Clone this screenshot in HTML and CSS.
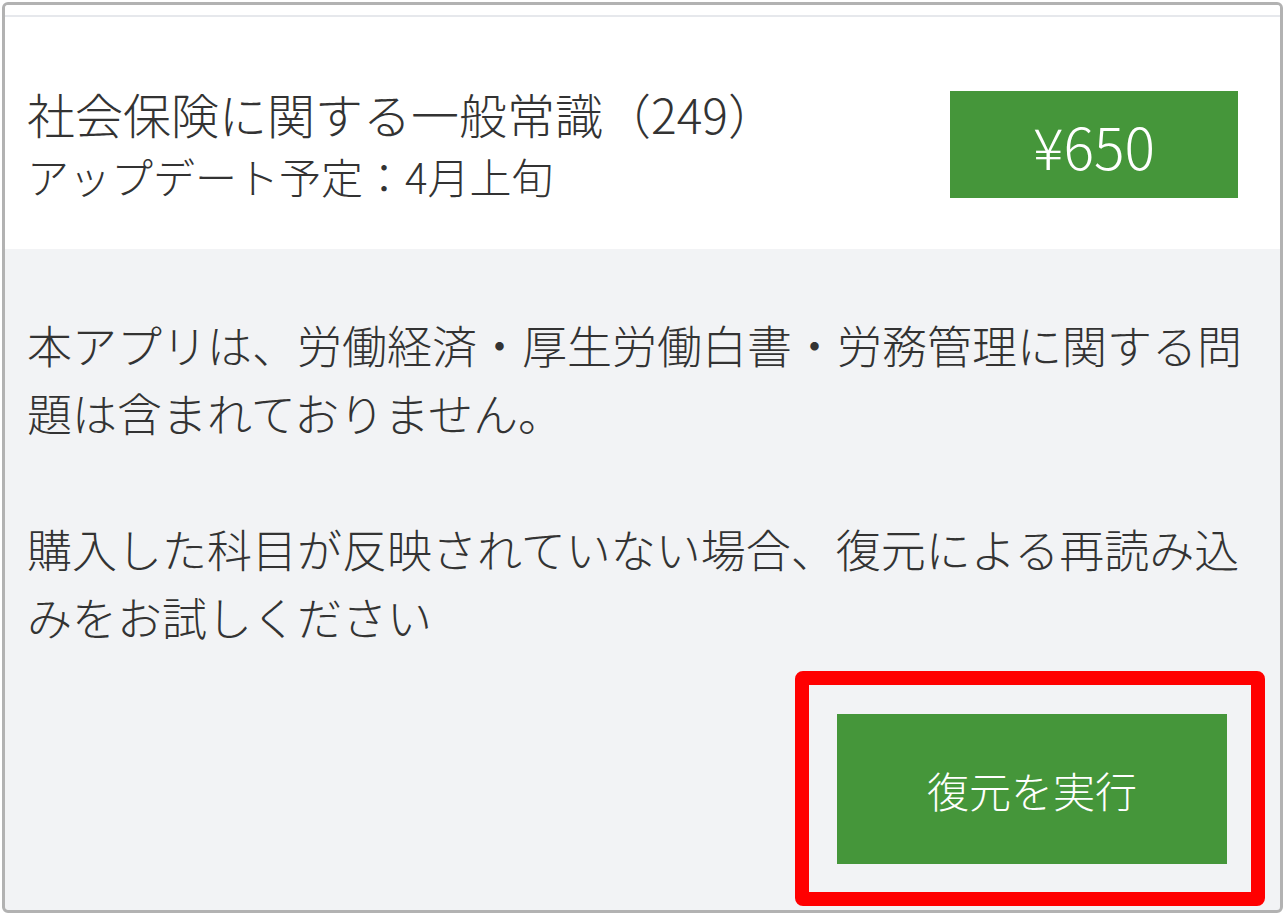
FILE: index.html
```html
<!DOCTYPE html>
<html lang="ja">
<head>
    <meta charset="UTF-8">
    <meta name="viewport" content="width=device-width, initial-scale=1.0">
    <title>科目の購入</title>
    <link rel="stylesheet" href="styles.css">
</head>
<body>
    <div class="frame">
        <div class="top-strip"></div>

        <section class="item">
            <div class="item-info">
                <h2 class="item-title">社会保険に関する一般常識（249）</h2>
                <p class="item-note">アップデート予定：4月上旬</p>
            </div>
            <button class="price-btn">¥650</button>
        </section>

        <section class="notice">
            <p class="notice-text">本アプリは、労働経済・厚生労働白書・労務管理に関する問題は含まれておりません。</p>
            <p class="notice-text">購入した科目が反映されていない場合、復元による再読み込みをお試しください</p>

            <div class="restore-row">
                <div class="restore-wrap">
                    <button class="restore-btn">復元を実行</button>
                    <span class="highlight"></span>
                </div>
            </div>
        </section>
    </div>
</body>
</html>
```

FILE: styles.css
```css
body {
    margin: 0;
    padding: 0;
    background-color: #ffffff;
    font-family: "Noto Sans CJK JP", "Noto Sans", sans-serif;
    font-weight: 300;
    color: #333333;
}
.frame {
    box-sizing: border-box;
    width: 1281px;
    height: 911px;
    margin: 2px 0 0 2px;
    border: 3px solid #b2b2b2;
    border-radius: 6px;
    overflow: hidden;
    background-color: #f2f3f5;
    display: flex;
    flex-direction: column;
}
.top-strip {
    height: 10px;
    background-color: #ffffff;
    border-bottom: 2px solid #e6e8ec;
}
.item {
    display: flex;
    justify-content: space-between;
    align-items: flex-start;
    height: 232px;
    padding: 0 42px 0 22px;
    background-color: #ffffff;
}
.item-info {
    padding-top: 64px;
}
.item-title {
    margin: 0;
    font-size: 48px;
    font-weight: 300;
    line-height: 64px;
}
.item-note {
    margin: 3px 0 0;
    font-size: 42px;
    line-height: 56px;
}
.price-btn {
    margin-top: 74px;
    width: 288px;
    height: 107px;
    border: none;
    background-color: #45963a;
    color: #ffffff;
    font-family: inherit;
    font-weight: 300;
    font-size: 57px;
    cursor: pointer;
}
.notice {
    flex: 1;
    padding: 62px 22px 0 22px;
}
.notice-text {
    margin: 0 0 68px;
    font-size: 45px;
    line-height: 68px;
}
.notice-text:last-of-type {
    margin-bottom: 0;
}
.restore-row {
    display: flex;
    justify-content: flex-end;
    padding: 63px 31px 0 0;
}
.restore-wrap {
    position: relative;
}
.restore-btn {
    display: block;
    width: 390px;
    height: 150px;
    border: none;
    background-color: #45963a;
    color: #ffffff;
    font-family: inherit;
    font-weight: 300;
    font-size: 42px;
    cursor: pointer;
}
.highlight {
    position: absolute;
    top: -43px;
    right: -38px;
    bottom: -42px;
    left: -42px;
    border: 14px solid #ff0000;
    border-radius: 8px;
    pointer-events: none;
}
```
